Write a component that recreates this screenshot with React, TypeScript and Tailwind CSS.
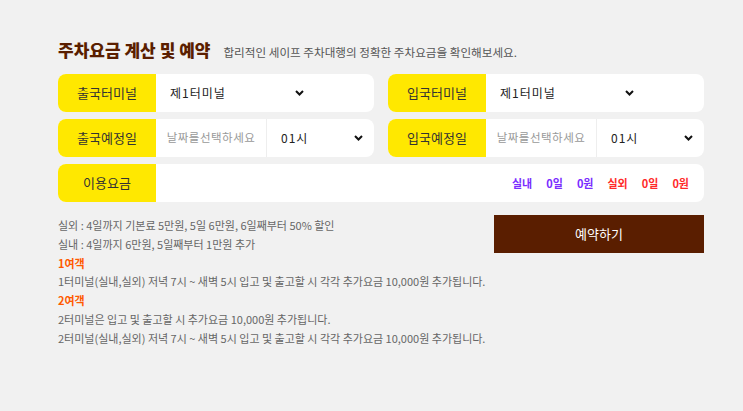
import React from 'react';

const font = { fontFamily: '"Noto Sans CJK KR", "Noto Sans", sans-serif' };

const Chevron = () => (
  <svg width="9" height="6" viewBox="0 0 9 6" className="shrink-0">
    <path d="M1 1l3.5 3.5L8 1" fill="none" stroke="#111" strokeWidth="2" />
  </svg>
);

const Label = ({ children }: { children: React.ReactNode }) => (
  <div className="w-[98px] shrink-0 h-full bg-[#ffe800] flex items-center justify-center text-[13px] text-[#333]">
    {children}
  </div>
);

const TerminalRow = ({ label }: { label: string }) => (
  <div className="flex-1 h-[38px] bg-white rounded-[8px] overflow-hidden flex items-center">
    <Label>{label}</Label>
    <div className="w-[158px] pl-[14px] pr-[10px] flex items-center justify-between text-[12px] text-[#222] tracking-[1px]">
      <span>제1터미널</span>
      <Chevron />
    </div>
  </div>
);

const DateRow = ({ label }: { label: string }) => (
  <div className="flex-1 h-[38px] bg-white rounded-[8px] overflow-hidden flex items-center">
    <Label>{label}</Label>
    <div className="w-[111px] h-full flex items-center justify-center text-[11.5px] text-[#999] border-r border-[#eeeeee] tracking-[0.5px]">
      날짜를선택하세요
    </div>
    <div className="flex-1 pl-[14px] pr-[11px] flex items-center justify-between text-[12px] text-[#222] tracking-[1px]">
      <span>01시</span>
      <Chevron />
    </div>
  </div>
);

export default function App() {
  return (
    <div className="w-[743px] h-[411px] bg-[#f1f1f1] pt-[38px] pl-[58px] pr-[39px]" style={font}>
      <div className="flex items-baseline gap-[13px] mb-[12px]">
        <h1 className="text-[17px] font-black text-[#5a1e00] leading-[24px]">주차요금 계산 및 예약</h1>
        <span className="text-[11.6px] text-[#555]">합리적인 세이프 주차대행의 정확한 주차요금을 확인해보세요.</span>
      </div>

      <div className="flex flex-col gap-[7px]">
        <div className="flex gap-[14px]">
          <TerminalRow label="출국터미널" />
          <TerminalRow label="입국터미널" />
        </div>
        <div className="flex gap-[14px]">
          <DateRow label="출국예정일" />
          <DateRow label="입국예정일" />
        </div>
        <div className="h-[38px] bg-white rounded-[8px] overflow-hidden flex items-center">
          <Label>이용요금</Label>
          <div className="flex-1 flex justify-end items-center gap-[14px] pr-[15px] text-[11px] font-bold">
            <span className="text-[#7a2cff]">실내</span>
            <span className="text-[#7a2cff]">0일</span>
            <span className="text-[#7a2cff]">0원</span>
            <span className="text-[#ff2a2a]">실외</span>
            <span className="text-[#ff2a2a]">0일</span>
            <span className="text-[#ff2a2a]">0원</span>
          </div>
        </div>
      </div>

      <div className="flex justify-between mt-[13px]">
        <div className="text-[11px] leading-[18.8px] text-[#666] pt-[1px] whitespace-nowrap">
          <p>실외 : 4일까지 기본료 5만원, 5일 6만원, 6일째부터 50% 할인</p>
          <p>실내 : 4일까지 6만원, 5일째부터 1만원 추가</p>
          <p className="text-[#ff5a00] font-bold">1여객</p>
          <p>1터미널(실내,실외) 저녁 7시 ~ 새벽 5시 입고 및 출고할 시 각각 추가요금 10,000원 추가됩니다.</p>
          <p className="text-[#ff5a00] font-bold">2여객</p>
          <p>2터미널은 입고 및 출고할 시 추가요금 10,000원 추가됩니다.</p>
          <p>2터미널(실내,실외) 저녁 7시 ~ 새벽 5시 입고 및 출고할 시 각각 추가요금 10,000원 추가됩니다.</p>
        </div>
        <button className="w-[210px] h-[38px] bg-[#5a1e00] text-white text-[13px] shrink-0">
          예약하기
        </button>
      </div>
    </div>
  );
}
